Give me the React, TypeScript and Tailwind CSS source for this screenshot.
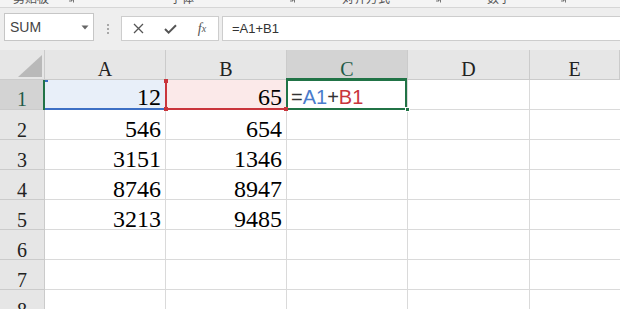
import React from "react";

const serif = "font-['Liberation_Serif',serif]";

function Launcher() {
  return (
    <svg width="8" height="8" viewBox="0 0 8 8" className="block">
      <path d="M0.5 0.5 H7.5 V7.5" fill="none" stroke="#777" strokeWidth="1" />
      <path d="M2 2 L6 6 M6 3 V6 H3" fill="none" stroke="#777" strokeWidth="1" />
    </svg>
  );
}

function RibbonStrip() {
  const label = "font-['Noto_Sans_CJK_SC','Noto_Sans',sans-serif] text-[12px] leading-[12px] text-[#555] -mt-[8px] whitespace-nowrap";
  return (
    <div className="flex h-[8px] items-start overflow-hidden border-b border-[#d6d6d6] bg-[#f4f4f4]">
      <div className="w-[13px] shrink-0" />
      <span className={`${label} w-[53px] shrink-0`}>剪贴板</span>
      <div className="-mt-[5px] w-[104px] shrink-0"><Launcher /></div>
      <span className={`${label} w-[117px] shrink-0`}>字体</span>
      <div className="-mt-[5px] w-[55px] shrink-0"><Launcher /></div>
      <span className={`${label} w-[91px] shrink-0`}>对齐方式</span>
      <div className="-mt-[5px] w-[54px] shrink-0"><Launcher /></div>
      <span className={`${label} w-[71px] shrink-0`}>数字</span>
      <div className="-mt-[5px] w-[20px] shrink-0"><Launcher /></div>
    </div>
  );
}

function Toolbar() {
  const sans = "font-['Liberation_Sans',Arial,sans-serif]";
  return (
    <div className="flex h-[42px] items-end bg-[#eeeeee] pb-[9px]">
      <div className={`ml-[4px] flex h-[28px] w-[90px] shrink-0 items-center justify-between border border-[#c6c6c6] bg-white pl-[5px] pr-[4px] ${sans} text-[14px] text-[#444]`}>
        <span>SUM</span>
        <svg width="8" height="5" viewBox="0 0 8 5" className="block">
          <path d="M0.5 0.5 L7.5 0.5 L4 4.5 Z" fill="#666" />
        </svg>
      </div>
      <div className="flex h-[25px] w-[27px] shrink-0 flex-col items-center justify-center gap-[2px]">
        <span className="block h-[2px] w-[2px] bg-[#a8a8a8]" />
        <span className="block h-[2px] w-[2px] bg-[#a8a8a8]" />
        <span className="block h-[2px] w-[2px] bg-[#a8a8a8]" />
      </div>
      <div className="flex h-[25px] w-[98px] shrink-0 items-center border border-[#cdcdcd] bg-white pl-[0px]">
        <div className="flex w-[32px] justify-center">
          <svg width="11" height="11" viewBox="0 0 11 11" className="block">
            <path d="M1 1 L10 10 M10 1 L1 10" stroke="#555" strokeWidth="1.3" />
          </svg>
        </div>
        <div className="flex w-[32px] justify-center">
          <svg width="13" height="10" viewBox="0 0 13 10" className="block">
            <path d="M1 5 L4.6 8.6 L12 1.2" fill="none" stroke="#555" strokeWidth="2" />
          </svg>
        </div>
        <div className={`flex w-[32px] justify-center ${serif} italic text-[14px] leading-[14px] text-[#555]`}>
          <span>f</span>
          <span className="text-[10px] leading-[14px] self-end">x</span>
        </div>
      </div>
      <div className={`ml-[3px] -mr-[4px] flex h-[25px] flex-1 items-center border border-[#cdcdcd] bg-white pl-[9px] ${sans} text-[13px] text-[#333]`}>
        =A1+B1
      </div>
    </div>
  );
}

const cols = ["A", "B", "C", "D", "E"];
const data: (number | null)[][] = [
  [12, 65],
  [546, 654],
  [3151, 1346],
  [8746, 8947],
  [3213, 9485],
  [null, null],
  [null, null],
  [null, null],
];

export default function App() {
  return (
    <div className="h-[309px] w-[620px] overflow-hidden bg-white">
      <RibbonStrip />
      <Toolbar />
      <div className="grid grid-cols-[45px_121px_121px_121px_122px_1fr]">
        {/* corner */}
        <div className="flex h-[30px] items-end justify-end border-r border-b border-[#cbcbcb] bg-[#e6e6e6] pr-[2px] pb-[2px]">
          <svg width="24" height="22" viewBox="0 0 24 22" className="block">
            <path d="M0 22 L24 22 L24 0 Z" fill="#b9b9b9" />
          </svg>
        </div>
        {cols.map((c) => {
          const sel = c === "C";
          return (
            <div
              key={c}
              className={`relative flex h-[30px] items-end justify-center border-r border-b border-[#cbcbcb] ${serif} text-[20px] leading-[20px] ${
                sel ? "bg-[#d3d3d3] text-[#1e5b47]" : "bg-[#e6e6e6] text-[#222]"
              }`}
            >
              {c}
              {sel && <div className="absolute -left-[1px] right-0 -bottom-[1px] h-[2px] bg-[#217346]" />}
            </div>
          );
        })}
        {data.map((row, i) => {
          const r = i + 1;
          const first = r === 1;
          return (
            <React.Fragment key={r}>
              <div
                className={`relative flex h-[30px] items-end justify-center border-r border-b border-[#cbcbcb] ${serif} text-[20px] leading-[18px] ${
                  first ? "bg-[#d3d3d3] pb-[1px] text-[#1e5b47]" : "bg-[#e6e6e6] text-[#222]"
                }`}
              >
                {r}
                {first && <div className="absolute -right-[1px] top-0 -bottom-[1px] w-[2px] bg-[#217346]" />}
              </div>
              {/* A */}
              <div
                className={`relative flex h-[30px] items-end justify-end border-r border-b border-[#dadada] pr-[4px] ${serif} text-[24px] leading-[20px] text-black ${
                  first ? "bg-[#e8eff9] pb-[2px]" : "bg-white"
                }`}
              >
                {row[0]}
                {first && (
                  <>
                    <div className="absolute left-0 right-0 -bottom-[1px] z-10 h-[2px] bg-[#3d6fc4]" />
                    <div className="absolute left-0 top-0 z-10 h-[2px] w-[3px] bg-[#3d6fc4]" />
                  </>
                )}
              </div>
              {/* B */}
              <div
                className={`relative flex h-[30px] items-end justify-end border-r border-b border-[#dadada] pr-[4px] ${serif} text-[24px] leading-[20px] text-black ${
                  first ? "bg-[#fbe9e9] pb-[2px]" : "bg-white"
                }`}
              >
                {row[1]}
                {first && (
                  <>
                    <div className="absolute -left-[1px] top-0 -bottom-[1px] z-10 w-[2px] bg-[#c9353c]" />
                    <div className="absolute -left-[1px] right-0 -bottom-[1px] z-10 h-[2px] bg-[#c9353c]" />
                    <div className="absolute -left-[2px] -top-[1px] z-20 h-[4px] w-[4px] bg-[#c9353c]" />
                    <div className="absolute -left-[2px] -bottom-[2px] z-20 h-[4px] w-[4px] bg-[#c9353c]" />
                    <div className="absolute -right-[2px] -bottom-[2px] z-20 h-[4px] w-[4px] bg-[#c9353c]" />
                  </>
                )}
              </div>
              {/* C */}
              <div
                className={`relative flex h-[30px] items-end justify-start border-r border-b border-[#dadada] bg-white pl-[4px] font-['Liberation_Sans',Arial,sans-serif] text-[20px] leading-[20px] ${
                  first ? "pb-[2px]" : ""
                }`}
              >
                {first && (
                  <>
                    <span className="text-[#333]">=</span>
                    <span className="text-[#4a7ccc]">A1</span>
                    <span className="text-[#333]">+</span>
                    <span className="text-[#c9353c]">B1</span>
                    <div className="absolute -left-[1px] -top-[1px] right-0 -bottom-[1px] z-10 border-2 border-[#217346]" />
                    <div className="absolute -right-[3px] -bottom-[3px] z-20 h-[5px] w-[5px] border border-white bg-[#217346]" />
                  </>
                )}
              </div>
              <div className="h-[30px] border-r border-b border-[#dadada] bg-white" />
              <div className="h-[30px] border-b border-[#dadada] bg-white" />
            </React.Fragment>
          );
        })}
      </div>
    </div>
  );
}
